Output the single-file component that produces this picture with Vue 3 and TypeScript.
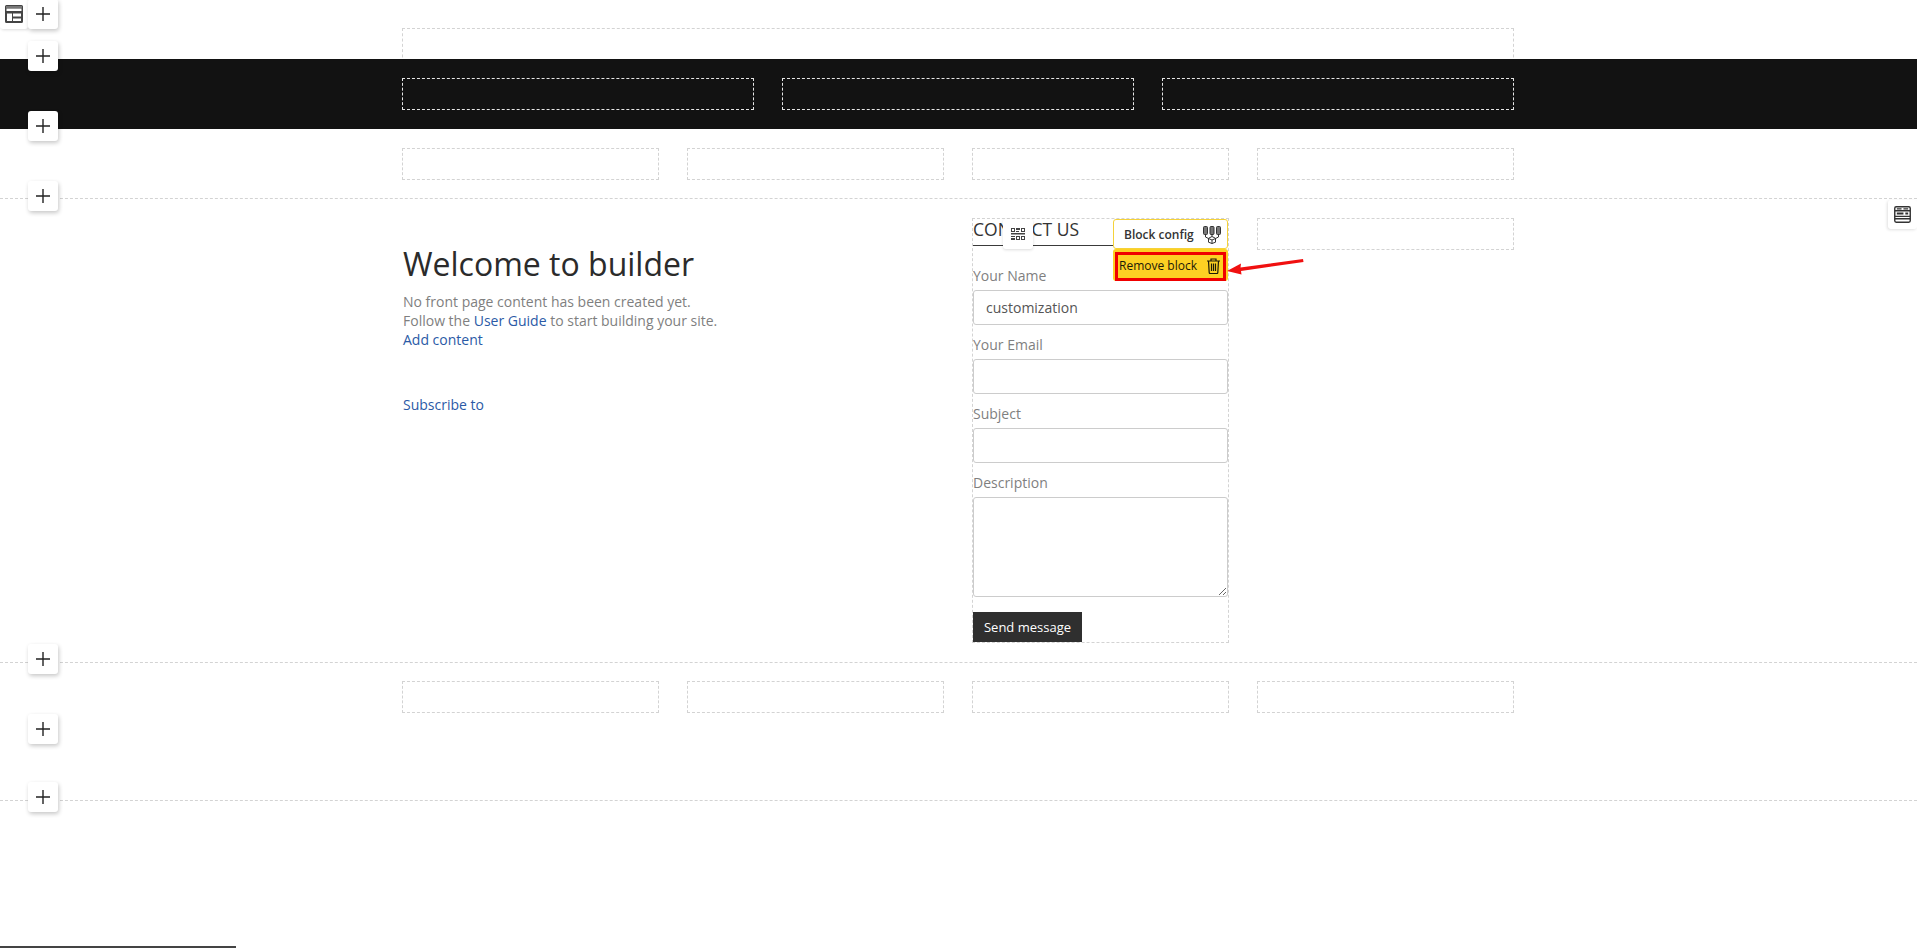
<script setup lang="ts">
const plusTops: number[] = [-1, 41, 111, 181, 644, 714, 782]
const thirds: number[] = [1, 2, 3]
const quarters: number[] = [1, 2, 3, 4]
const fields: { label: string; value: string }[] = [
  { label: 'Your Name', value: 'customization' },
  { label: 'Your Email', value: '' },
  { label: 'Subject', value: '' },
]
</script>

<template>
  <div class="page">
    <section class="top">
      <div class="wrap"><div class="slot top-slot"></div></div>
    </section>

    <section class="dark">
      <div class="wrap grid-3">
        <div v-for="n in thirds" :key="n" class="slot slot-light"></div>
      </div>
    </section>

    <section class="row-4">
      <div class="wrap grid-4">
        <div v-for="n in quarters" :key="n" class="slot"></div>
      </div>
    </section>

    <section class="main">
      <div class="wrap main-grid">
        <div class="welcome">
          <h1>Welcome to builder</h1>
          <p>No front page content has been created yet.<br />Follow the <a href="#">User Guide</a> to start building your site.<br /><a href="#">Add content</a></p>
          <a href="#" class="subscribe">Subscribe to</a>
        </div>

        <div class="form-block">
          <h2 class="form-title">CONTACT US</h2>
          <div v-for="f in fields" :key="f.label" class="field">
            <label>{{ f.label }}</label>
            <input type="text" :value="f.value" />
          </div>
          <div class="field field-area">
            <label>Description</label>
            <textarea></textarea>
          </div>
          <button class="send" type="button">Send message</button>

          <div class="handle">
            <svg width="14" height="12" viewBox="0 0 14 12" fill="#444">
              <path fill-rule="evenodd" d="M0 0h4v4H0zM1 1v2h2V1zM5 0h4v2H5zM5 3h3v1H5zM10 0h4v4h-4zM11 1v2h2V1zM0 5h14v1.500H0zM0 8h4v1H0zM0 10h4v2H0zM5 8h4v4H5zM6 9v2h2V9zM10 8h4v4h-4zM11 9v2h2V9z" />
            </svg>
          </div>

          <div class="menu">
            <div class="menu-config">
              <span>Block config</span>
              <svg width="18" height="18" viewBox="0 0 18 18" fill="none" stroke="#333" stroke-width="1">
                <rect x="0.500" y="0.500" width="4" height="8" rx="1" fill="#777" />
                <rect x="7" y="0.500" width="4" height="8" rx="1" fill="#777" />
                <rect x="13.500" y="0.500" width="4" height="8" rx="1" fill="#777" />
                <path d="M2.500 8.500v2.500l3 1.500M9 8.500v2M15.500 8.500v2.500l-3 1.500" />
                <path d="M9 10.500l3.500 1.800v3.900L9 17.500l-3.500-1.300v-3.900zM9 14v3.500M5.500 12.500L9 14l3.500-1.500" />
              </svg>
            </div>
            <div class="menu-remove">
              <div class="remove-inner">
                <span>Remove block</span>
                <svg width="13" height="16" viewBox="0 0 13 16" fill="none" stroke="#1d1a08" stroke-width="1.200">
                  <path d="M0 3h13M4 3V1h5v2M1.500 3l.7 11.500a1 1 0 0 0 1 1h6.600a1 1 0 0 0 1-1L11.500 3" />
                  <path d="M4.500 5.500v7.500M6.500 5.500v7.500M8.500 5.500v7.500" />
                </svg>
              </div>
            </div>
          </div>

          <svg class="arrow" width="80" height="16" viewBox="0 0 80 16">
            <path d="M0 12L14 4.500 13.500 8.500 76 0 76.500 3 14 12 14.500 15.500z" fill="#f01010" />
          </svg>
        </div>

        <div class="slot side-slot"></div>
      </div>
    </section>

    <section class="footer-row">
      <div class="wrap grid-4">
        <div v-for="n in quarters" :key="n" class="slot"></div>
      </div>
    </section>

    <div class="tool tool-left">
      <svg width="18" height="18" viewBox="0 0 18 18">
        <path fill="#444" fill-rule="evenodd" d="M1.500 0h15A1.500 1.500 0 0 1 18 1.500v15a1.500 1.500 0 0 1-1.500 1.500h-15A1.500 1.500 0 0 1 0 16.500v-15A1.500 1.500 0 0 1 1.500 0zM1.500 3.500V6h15V3.500zM2 8.500V16h5V8.500zM8 8.500v3h8v-3zM8 13.500V16h8v-2.500z" />
        <rect x="1" y="1" width="16" height="2.200" fill="#777" />
      </svg>
    </div>
    <div v-for="t in plusTops" :key="t" class="tool plus" :style="{ top: t + 'px' }">
      <svg width="14" height="14" viewBox="0 0 14 14">
        <path d="M7 0v14M0 7h14" stroke="#222" stroke-width="1.400" />
      </svg>
    </div>
    <div class="tool tool-right">
      <svg width="17" height="17" viewBox="0 0 18 18" fill="none" stroke="#333" stroke-width="1.500">
        <rect x="0.800" y="0.800" width="16.400" height="16.400" rx="1.500" />
        <path d="M1 5h16M1 11h16M1 13.500h16" />
        <path d="M3 3h5M10 3h5" stroke-width="1.500" />
        <path d="M3 8h7M12 8h3" stroke-width="2" />
      </svg>
    </div>
    <div class="scrollbar"></div>
  </div>
</template>

<style>
html, body { margin: 0; background: #fff; }
</style>

<style scoped>
.page {
  position: relative;
  height: 948px;
  overflow: hidden;
  background: #fff;
  font-family: "Open Sans", "Liberation Sans", sans-serif;
  font-size: 14px;
  line-height: 19px;
  color: #7f7f7f;
}
.wrap {
  width: 1112px;
  margin-left: 402px;
}
.slot {
  box-sizing: border-box;
  height: 32px;
  border: 1px dashed #d3d3d3;
}
.slot-light { border-color: #e6e6e6; }
.top {
  height: 59px;
  padding-top: 28px;
  box-sizing: border-box;
  overflow: hidden;
}
.top-slot { height: 40px; }
.dark {
  height: 70px;
  padding-top: 19px;
  box-sizing: border-box;
  background: #121212;
}
.grid-3 {
  display: grid;
  grid-template-columns: repeat(3, 1fr);
  gap: 28px;
}
.grid-4 {
  display: grid;
  grid-template-columns: repeat(4, 1fr);
  gap: 28px;
}
.row-4 {
  height: 69px;
  padding-top: 19px;
  box-sizing: border-box;
}
.main {
  height: 465px;
  box-sizing: border-box;
  padding-top: 19px;
  border-top: 1px dashed #d3d3d3;
  border-bottom: 1px dashed #d3d3d3;
}
.main-grid {
  display: grid;
  grid-template-columns: repeat(4, 1fr);
  gap: 28px;
  align-items: start;
}
.welcome {
  grid-column: span 2;
  padding: 24px 0 0 1px;
}
.welcome h1 {
  margin: 0 0 6px;
  font-size: 32px;
  line-height: 44px;
  font-weight: 400;
  color: #2b2b2b;
}
.welcome p { margin: 0 0 46px; }
.welcome a {
  color: #2b5aa6;
  text-decoration: none;
}
.subscribe { display: block; }

.form-block {
  position: relative;
  box-sizing: border-box;
  height: 425px;
  border: 1px dashed #d3d3d3;
}
.form-title {
  margin: 0 0 20px;
  height: 26px;
  border-bottom: 1px solid #3a3a3a;
  font-size: 17.5px;
  line-height: 21px;
  font-weight: 400;
  color: #333;
}
.field { height: 69px; }
.field-area { height: 139px; }
.field label {
  display: block;
  height: 19px;
  margin-bottom: 5px;
}
.field input,
.field textarea {
  display: block;
  box-sizing: border-box;
  width: 100%;
  height: 35px;
  padding: 0 12px;
  margin: 0;
  border: 1px solid #ccc;
  border-radius: 3px;
  background: #fff;
  font: inherit;
  color: #555;
  outline: none;
}
.field textarea { height: 100px; }
.send {
  display: block;
  width: 109px;
  height: 30px;
  padding: 0;
  border: 0;
  background: #2f2f2f;
  color: #fff;
  font: inherit;
  font-size: 13px;
}
.handle {
  position: absolute;
  left: 30px;
  top: 0;
  width: 30px;
  height: 30px;
  display: flex;
  align-items: center;
  justify-content: center;
  background: #fff;
  border-radius: 3px;
  box-shadow: 0 1px 3px rgba(0, 0, 0, 0.14);
}
.menu {
  position: absolute;
  right: 0;
  top: 0;
  width: 115px;
  font-size: 12px;
  line-height: 16px;
}
.menu-config {
  box-sizing: border-box;
  height: 30px;
  display: flex;
  align-items: center;
  justify-content: space-between;
  padding: 1px 6px 0 10px;
  background: #fff;
  border: 1px solid #f5d23a;
  border-radius: 3px;
  color: #333;
  font-weight: 600;
}
.menu-remove {
  box-sizing: border-box;
  height: 32px;
  padding: 3px 2px 0;
  background: #fdd023;
  border-radius: 3px;
}
.remove-inner {
  box-sizing: border-box;
  height: 29px;
  display: flex;
  align-items: center;
  justify-content: space-between;
  padding: 0 3px 2px 1px;
  border: 3px solid #f00000;
  color: #1d1a08;
}
.arrow {
  position: absolute;
  left: 254px;
  top: 40px;
}

.footer-row {
  height: 138px;
  box-sizing: border-box;
  padding-top: 18px;
  border-bottom: 1px dashed #d3d3d3;
}

.tool {
  position: absolute;
  box-sizing: border-box;
  display: flex;
  align-items: center;
  justify-content: center;
  background: #fff;
  border-radius: 3px;
}
.plus {
  left: 28px;
  width: 30px;
  height: 30px;
  box-shadow: 1px 2px 4px rgba(0, 0, 0, 0.22);
}
.tool-left {
  left: 0;
  top: -1px;
  width: 28px;
  height: 30px;
  box-shadow: 1px 1px 3px rgba(0, 0, 0, 0.14);
}
.tool-right {
  right: 0;
  top: 200px;
  width: 29px;
  height: 29px;
  box-shadow: -1px 1px 3px rgba(0, 0, 0, 0.12);
}
.scrollbar {
  position: absolute;
  left: 0;
  bottom: 0;
  width: 236px;
  height: 2px;
  background: #444;
}
</style>
